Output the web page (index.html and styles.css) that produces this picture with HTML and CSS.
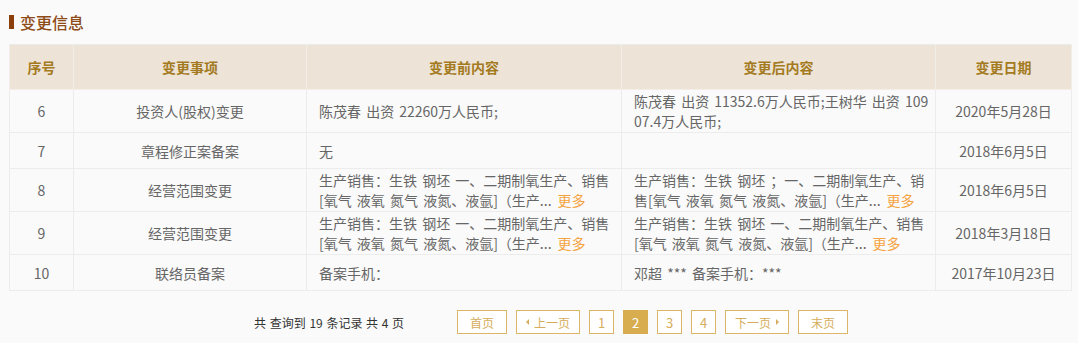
FILE: index.html
```html
<!DOCTYPE html>
<html lang="zh-CN">
<head>
<meta charset="utf-8">
<link rel="stylesheet" href="styles.css">
</head>
<body>
<div class="page">
  <h2 class="title"><span class="bar"></span>变更信息</h2>
  <table class="tbl">
    <colgroup>
      <col class="c1"><col class="c2"><col class="c3"><col class="c4"><col class="c5">
    </colgroup>
    <thead>
      <tr class="head">
        <th>序号</th><th>变更事项</th><th>变更前内容</th><th>变更后内容</th><th>变更日期</th>
      </tr>
    </thead>
    <tbody>
      <tr>
        <td class="ctr">6</td>
        <td class="ctr">投资人(股权)变更</td>
        <td>陈茂春 出资 22260万人民币;</td>
        <td><span class="ln">陈茂春 出资 11352.6万人民币;王树华 出资 109</span><span class="ln">07.4万人民币;</span></td>
        <td class="ctr">2020年5月28日</td>
      </tr>
      <tr>
        <td class="ctr">7</td>
        <td class="ctr">章程修正案备案</td>
        <td>无</td>
        <td></td>
        <td class="ctr">2018年6月5日</td>
      </tr>
      <tr>
        <td class="ctr">8</td>
        <td class="ctr">经营范围变更</td>
        <td><span class="ln">生产销售：生铁 钢坯 一、二期制氧生产、销售</span><span class="ln"><span>[氧气 液氧 氮气 液氮、液氩]（生产...</span><a class="more">更多</a></span></td>
        <td><span class="ln">生产销售：生铁 钢坯 ；一、二期制氧生产、销</span><span class="ln"><span>售[氧气 液氧 氮气 液氮、液氩]（生产...</span><a class="more">更多</a></span></td>
        <td class="ctr">2018年6月5日</td>
      </tr>
      <tr>
        <td class="ctr">9</td>
        <td class="ctr">经营范围变更</td>
        <td><span class="ln">生产销售：生铁 钢坯 一、二期制氧生产、销售</span><span class="ln"><span>[氧气 液氧 氮气 液氮、液氩]（生产...</span><a class="more">更多</a></span></td>
        <td><span class="ln">生产销售：生铁 钢坯 一、二期制氧生产、销售</span><span class="ln"><span>[氧气 液氧 氮气 液氮、液氩]（生产...</span><a class="more">更多</a></span></td>
        <td class="ctr">2018年3月18日</td>
      </tr>
      <tr>
        <td class="ctr">10</td>
        <td class="ctr">联络员备案</td>
        <td>备案手机：</td>
        <td>邓超 *** 备案手机：***</td>
        <td class="ctr">2017年10月23日</td>
      </tr>
    </tbody>
  </table>
  <div class="pager">
    <span class="total">共 查询到 19 条记录 共 4 页</span>
    <div class="btns">
      <a class="pbtn w50">首页</a>
      <a class="pbtn w64"><span class="tri-l"></span>上一页</a>
      <a class="pbtn num">1</a>
      <a class="pbtn num active">2</a>
      <a class="pbtn num">3</a>
      <a class="pbtn num">4</a>
      <a class="pbtn w64">下一页<span class="tri-r"></span></a>
      <a class="pbtn w50">末页</a>
    </div>
  </div>
</div>
</body>
</html>
```

FILE: styles.css
```css
* { box-sizing: border-box; }
html, body { margin: 0; padding: 0; background: #fafafa; }
body {
  font-family: "Noto Sans CJK SC", "Noto Sans", sans-serif;
  color: #666;
}
.page { padding: 10px 7px 0 9px; }
.title {
  margin: 0;
  display: flex;
  align-items: center;
  height: 24px;
  font-size: 16px;
  font-weight: 500;
  color: #8e4a17;
  line-height: 24px;
}
.bar {
  display: inline-block;
  width: 5px;
  height: 14px;
  background: #8b3f0b;
  margin-right: 6px;
}
.tbl {
  margin-top: 10px;
  width: 1062px;
  table-layout: fixed;
  border-collapse: collapse;
  border: 1px solid #ebebeb;
}
.c1 { width: 64px; }
.c2 { width: 233px; }
.c3 { width: 315px; }
.c4 { width: 314px; }
.c5 { width: 136px; }
.head { height: 45px; background: #ede4d7; }
.head th {
  font-size: 14px;
  font-weight: 700;
  color: #a47a1f;
  border: 1px solid #f2ede6;
  border-top: none;
}
tbody tr { height: 36px; }
tbody td {
  font-size: 14px;
  line-height: 20px;
  padding: 1px 12px;
  border: 1px solid #ececec;
  word-spacing: 2px;
  vertical-align: middle;
}
.ln { display: block; white-space: nowrap; }
.ctr { text-align: center; }
.more { color: #f5a340; margin-left: 6px; }
.pager {
  display: flex;
  align-items: center;
  margin-top: 19px;
  padding-left: 245px;
  height: 24px;
}
.total { font-size: 12px; color: #333; word-spacing: 1px; }
.btns { display: flex; gap: 9px; margin-left: 53px; }
.pbtn {
  height: 24px;
  display: flex;
  align-items: center;
  justify-content: center;
  border: 1px solid #dcb569;
  font-size: 12px;
  color: #d6ad5c;
  background: #fff;
}
.w50 { width: 50px; }
.w64 { width: 64px; }
.num { width: 25px; font-size: 13px; }
.active { background: #d8ad50; border-color: #d8ad50; color: #fff; }
.tri-l, .tri-r {
  display: inline-block;
  width: 0; height: 0;
  border-top: 3px solid transparent;
  border-bottom: 3px solid transparent;
}
.tri-l { border-right: 3px solid #d6ad5c; margin-right: 5px; }
.tri-r { border-left: 3px solid #d6ad5c; margin-left: 5px; }
```
